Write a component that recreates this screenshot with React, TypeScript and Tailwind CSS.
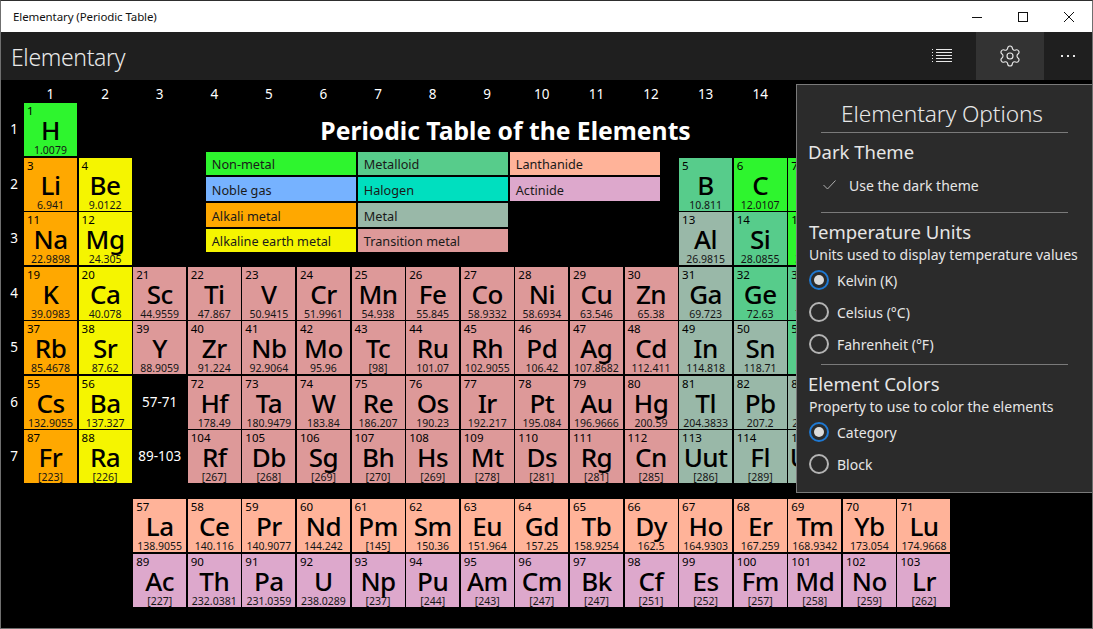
import React from "react";
import { Settings } from "lucide-react";

const font = { fontFamily: '"Noto Sans", "Open Sans", sans-serif' };

const C: Record<string, string> = {
  non: "bg-[#2ef52e]",
  noble: "bg-[#76b2ff]",
  alk: "bg-[#ffa800]",
  ear: "bg-[#f5f500]",
  oid: "bg-[#57cc8b]",
  hal: "bg-[#00dfbf]",
  met: "bg-[#99b8a8]",
  tra: "bg-[#dd9999]",
  lan: "bg-[#ffb399]",
  act: "bg-[#dda8cc]",
};

type E = [number, number, number, string, string, string];

const tr = (row: number, start: number, startCol: number, list: string): E[] =>
  list.split(" ").map((s, i) => {
    const [sym, mass] = s.split(":");
    return [row, startCol + i, start + i, sym, mass, "tra"] as E;
  });

const elements: E[] = [
  [1, 1, 1, "H", "1.0079", "non"],
  [2, 1, 3, "Li", "6.941", "alk"],
  [2, 2, 4, "Be", "9.0122", "ear"],
  [2, 13, 5, "B", "10.811", "oid"],
  [2, 14, 6, "C", "12.0107", "non"],
  [2, 15, 7, "N", "14.0067", "non"],
  [3, 1, 11, "Na", "22.9898", "alk"],
  [3, 2, 12, "Mg", "24.305", "ear"],
  [3, 13, 13, "Al", "26.9815", "met"],
  [3, 14, 14, "Si", "28.0855", "oid"],
  [3, 15, 15, "P", "30.9738", "non"],
  [4, 1, 19, "K", "39.0983", "alk"],
  [4, 2, 20, "Ca", "40.078", "ear"],
  ...tr(4, 21, 3, "Sc:44.9559 Ti:47.867 V:50.9415 Cr:51.9961 Mn:54.938 Fe:55.845 Co:58.9332 Ni:58.6934 Cu:63.546 Zn:65.38"),
  [4, 13, 31, "Ga", "69.723", "met"],
  [4, 14, 32, "Ge", "72.63", "oid"],
  [4, 15, 33, "As", "74.9216", "oid"],
  [5, 1, 37, "Rb", "85.4678", "alk"],
  [5, 2, 38, "Sr", "87.62", "ear"],
  ...tr(5, 39, 3, "Y:88.9059 Zr:91.224 Nb:92.9064 Mo:95.96 Tc:[98] Ru:101.07 Rh:102.9055 Pd:106.42 Ag:107.8682 Cd:112.411"),
  [5, 13, 49, "In", "114.818", "met"],
  [5, 14, 50, "Sn", "118.71", "met"],
  [5, 15, 51, "Sb", "121.76", "oid"],
  [6, 1, 55, "Cs", "132.9055", "alk"],
  [6, 2, 56, "Ba", "137.327", "ear"],
  ...tr(6, 72, 4, "Hf:178.49 Ta:180.9479 W:183.84 Re:186.207 Os:190.23 Ir:192.217 Pt:195.084 Au:196.9666 Hg:200.59"),
  [6, 13, 81, "Tl", "204.3833", "met"],
  [6, 14, 82, "Pb", "207.2", "met"],
  [6, 15, 83, "Bi", "208.9804", "met"],
  [7, 1, 87, "Fr", "[223]", "alk"],
  [7, 2, 88, "Ra", "[226]", "ear"],
  ...tr(7, 104, 4, "Rf:[267] Db:[268] Sg:[269] Bh:[270] Hs:[269] Mt:[278] Ds:[281] Rg:[281] Cn:[285]"),
  [7, 13, 113, "Uut", "[286]", "met"],
  [7, 14, 114, "Fl", "[289]", "met"],
  [7, 15, 115, "Uup", "[288]", "met"],
  ...tr(9, 57, 3, "La:138.9055 Ce:140.116 Pr:140.9077 Nd:144.242 Pm:[145] Sm:150.36 Eu:151.964 Gd:157.25 Tb:158.9254 Dy:162.5 Ho:164.9303 Er:167.259 Tm:168.9342 Yb:173.054 Lu:174.9668").map((e) => [e[0], e[1], e[2], e[3], e[4], "lan"] as E),
  ...tr(10, 89, 3, "Ac:[227] Th:232.0381 Pa:231.0359 U:238.0289 Np:[237] Pu:[244] Am:[243] Cm:[247] Bk:[247] Cf:[251] Es:[252] Fm:[257] Md:[258] No:[259] Lr:[262]").map((e) => [e[0], e[1], e[2], e[3], e[4], "act"] as E),
];

const legend: [string, string][] = [
  ["Non-metal", "non"], ["Metalloid", "oid"], ["Lanthanide", "lan"],
  ["Noble gas", "noble"], ["Halogen", "hal"], ["Actinide", "act"],
  ["Alkali metal", "alk"], ["Metal", "met"], ["", ""],
  ["Alkaline earth metal", "ear"], ["Transition metal", "tra"], ["", ""],
];

function Cell({ e }: { e: E }) {
  const [row, col, num, sym, mass, cat] = e;
  return (
    <div
      className={`${C[cat]} flex flex-col items-center overflow-hidden text-black`}
      style={{ gridColumn: col + 1, gridRow: row + 1 }}
    >
      <div className="self-start h-[13px] pl-[3px] pt-[2px] text-[11.5px] leading-[11px]">{num}</div>
      <div className="h-[28px] text-[26px] font-medium leading-[28px] tracking-[-0.5px]">{sym}</div>
      <div className="h-[12px] text-[10.5px] leading-[12px] text-[#151515]">{mass}</div>
    </div>
  );
}

function Radio({ label, on }: { label: string; on?: boolean }) {
  return (
    <div className="flex items-center h-[32px] text-[14px] text-[#e6e6e6]">
      <span className={`ml-[12px] mr-[8px] flex h-[20px] w-[20px] items-center justify-center rounded-full border-2 ${on ? "border-[#1e78d2]" : "border-[#b4b4b4]"}`}>
        {on && <span className="h-[10px] w-[10px] rounded-full bg-[#dcdcdc]" />}
      </span>
      {label}
    </div>
  );
}

const Divider = () => <div className="ml-[24px] mr-[24px] h-px bg-[#7a7a7a]" />;

export default function App() {
  return (
    <div style={font} className="relative h-[629px] w-[1093px] overflow-hidden border border-[#6f6f6f] border-t-[#2e2e2e] bg-black">
      <div className="flex h-[31px] items-center bg-white text-[11.5px] tracking-[-0.1px] text-[#111]">
        <span className="ml-[12px]">Elementary (Periodic Table)</span>
        <div className="ml-auto flex h-full">
          <span className="flex w-[46px] items-center justify-center">
            <svg width="10" height="10" viewBox="0 0 10 10"><path d="M0 5.5h10" stroke="#111" /></svg>
          </span>
          <span className="flex w-[46px] items-center justify-center">
            <svg width="10" height="10" viewBox="0 0 10 10"><rect x=".5" y=".5" width="9" height="9" fill="none" stroke="#111" /></svg>
          </span>
          <span className="flex w-[46px] items-center justify-center">
            <svg width="10" height="10" viewBox="0 0 10 10"><path d="M0 0l10 10M10 0L0 10" stroke="#111" /></svg>
          </span>
        </div>
      </div>
      <div className="flex h-[48px] items-center bg-[#1f1f1f] text-[#e8e8e8]">
        <span className="ml-[10px] pt-[2px] text-[23px] font-light tracking-[-0.35px]">Elementary</span>
        <div className="ml-auto flex h-full">
          <span className="flex w-[68px] items-center justify-center">
            <svg width="20" height="14" viewBox="0 0 20 14" fill="none" stroke="#e8e8e8">
              <path d="M4 .5h16M4 3.5h16M4 6.5h16M4 9.5h16M4 12.5h16" />
              <path d="M0 .5h2M0 3.5h2M0 6.5h2M0 9.5h2M0 12.5h2" strokeDasharray="1 1" />
            </svg>
          </span>
          <span className="flex w-[68px] items-center justify-center bg-[#333333]">
            <Settings size={24} strokeWidth={1.15} color="#e8e8e8" />
          </span>
          <span className="flex w-[48px] items-center justify-center gap-[4px]">
            <i className="h-[2px] w-[2px] bg-[#e8e8e8]" />
            <i className="h-[2px] w-[2px] bg-[#e8e8e8]" />
            <i className="h-[2px] w-[2px] bg-[#e8e8e8]" />
          </span>
        </div>
      </div>

      <div className="grid grid-cols-[21.4px_repeat(18,53px)] grid-rows-[21.5px_repeat(7,53px)_13px_53px_53px] gap-x-[1.6px] gap-y-[1.5px]">
        {Array.from({ length: 14 }, (_, i) => (
          <div key={i} className="flex items-end justify-center text-[13.5px] leading-[16px] text-white" style={{ gridColumn: i + 2, gridRow: 1 }}>
            {i + 1}
          </div>
        ))}
        {[1, 2, 3, 4, 5, 6, 7].map((r) => (
          <div key={r} className="flex items-center justify-center pl-[5px] text-[13.5px] text-white" style={{ gridColumn: 1, gridRow: r + 1 }}>
            {r}
          </div>
        ))}
        <div className="col-start-5 col-end-17 row-start-2 pr-[18px] pt-[11px] text-center text-[24.7px] font-bold leading-[34px] text-white">
          Periodic Table of the Elements
        </div>
        <div className="col-start-5 col-end-14 row-start-2 row-end-5 pl-[18px] pt-[49px]">
          <div className="grid grid-cols-[150px_150px_150px] grid-rows-[23px_24px_24px_23px] gap-x-[2px] gap-y-[2px] text-[12.7px]">
            {legend.map(([t, c], i) =>
              t ? (
                <div key={i} className={`${C[c]} flex items-center pl-[6px] pt-[3px] text-[#1a1a1a]`}>{t}</div>
              ) : (
                <div key={i} />
              )
            )}
          </div>
        </div>
        {elements.map((e) => (
          <Cell key={e[2]} e={e} />
        ))}
        {[["57-71", 6], ["89-103", 7]].map(([t, r]) => (
          <div key={t as string} className="flex items-center justify-center text-[13.5px] text-white" style={{ gridColumn: 4, gridRow: (r as number) + 1 }}>
            {t}
          </div>
        ))}
      </div>

      <div className="absolute left-[795px] top-[83px] h-[409px] w-[297px] border border-[#7a7a7a] bg-[#2b2b2b] text-[#e6e6e6]">
        <div className="h-[47px] pr-[5px] pt-[11px] text-center text-[22.7px] font-light leading-[36px] tracking-[-0.1px]">Elementary Options</div>
        <Divider />
        <div className="ml-[11px] mt-[6px] text-[18.5px] leading-[26px]">Dark Theme</div>
        <div className="flex h-[40px] items-center text-[14px]">
          <svg className="ml-[26px]" width="13" height="10" viewBox="0 0 13 10" fill="none" stroke="#b0b0b0"><path d="M.5 5l4 4L12.5 .5" /></svg>
          <span className="ml-[13px]">Use the dark theme</span>
        </div>
        <div className="mt-[7px]"><Divider /></div>
        <div className="ml-[12px] mt-[6px] text-[18.5px] leading-[26px]">Temperature Units</div>
        <div className="ml-[12px] text-[14px] leading-[19px]">Units used to display temperature values</div>
        <Radio label="Kelvin (K)" on />
        <Radio label="Celsius (°C)" />
        <Radio label="Fahrenheit (°F)" />
        <div className="mt-[4px]"><Divider /></div>
        <div className="ml-[11px] mt-[6px] text-[18.5px] leading-[26px]">Element Colors</div>
        <div className="ml-[12px] text-[14px] leading-[19px]">Property to use to color the elements</div>
        <Radio label="Category" on />
        <Radio label="Block" />
      </div>
    </div>
  );
}
